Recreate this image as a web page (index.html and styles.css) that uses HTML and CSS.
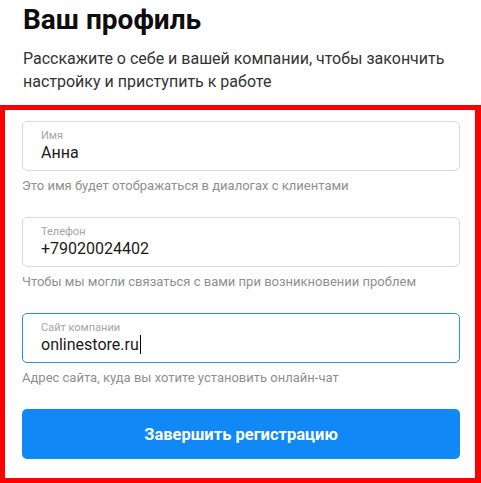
FILE: index.html
```html
<!DOCTYPE html>
<html lang="ru">
<head>
    <meta charset="UTF-8">
    <meta name="viewport" content="width=device-width, initial-scale=1.0">
    <title>Ваш профиль</title>
    <link rel="stylesheet" href="styles.css">
</head>
<body>
    <header class="intro">
        <h1>Ваш профиль</h1>
        <p>Расскажите о себе и вашей компании, чтобы закончить настройку и приступить к работе</p>
    </header>

    <form class="profile-form">
        <div class="group">
            <div class="field">
                <span class="field-label">Имя</span>
                <span class="field-value">Анна</span>
            </div>
            <p class="hint">Это имя будет отображаться в диалогах с клиентами</p>
        </div>

        <div class="group">
            <div class="field">
                <span class="field-label">Телефон</span>
                <span class="field-value">+79020024402</span>
            </div>
            <p class="hint">Чтобы мы могли связаться с вами при возникновении проблем</p>
        </div>

        <div class="group">
            <div class="field field-active">
                <span class="field-label">Сайт компании</span>
                <span class="field-value">onlinestore.ru<span class="caret"></span></span>
            </div>
            <p class="hint">Адрес сайта, куда вы хотите установить онлайн-чат</p>
        </div>

        <button type="button" class="submit">Завершить регистрацию</button>
    </form>
</body>
</html>
```

FILE: styles.css
```css
body {
    font-family: Roboto, "Liberation Sans", sans-serif;
    margin: 0;
    padding: 0;
    background: #fff;
    color: #1a1a1a;
    width: 481px;
}
.intro {
    padding: 2px 0 0 23px;
    height: 105px;
    box-sizing: border-box;
}
.intro h1 {
    margin: 0;
    font-size: 28px;
    line-height: 36px;
    font-weight: 700;
    color: #0d0d0d;
}
.intro p {
    margin: 9px 0 0;
    font-size: 16px;
    line-height: 23px;
    color: #333;
    width: 445px;
}
.profile-form {
    border: 5px solid #ff0000;
    border-right-width: 6px;
    padding: 11px 15px 19px 17px;
    height: 378px;
    box-sizing: border-box;
}
.group {
    margin-bottom: 22px;
}
.field {
    border: 1px solid #d9d9d9;
    border-radius: 5px;
    height: 50px;
    box-sizing: border-box;
    padding: 7px 18px 0;
    display: flex;
    flex-direction: column;
}
.field-active {
    border-color: #2a8bf2;
}
.field-label {
    font-size: 11px;
    line-height: 13px;
    color: #a6a6a6;
}
.field-value {
    font-size: 16px;
    line-height: 21px;
    color: #1a1a1a;
}
.caret {
    display: inline-block;
    width: 1px;
    height: 19px;
    background: #000;
    vertical-align: -4px;
    margin-left: 1px;
}
.hint {
    margin: 6px 0 0;
    font-size: 13px;
    line-height: 18px;
    color: #8f8f8f;
}
.submit {
    display: block;
    width: 100%;
    height: 50px;
    border: none;
    border-radius: 5px;
    background: #1088f5;
    color: #fff;
    font-family: inherit;
    font-size: 16.5px;
    font-weight: 700;
}
```
